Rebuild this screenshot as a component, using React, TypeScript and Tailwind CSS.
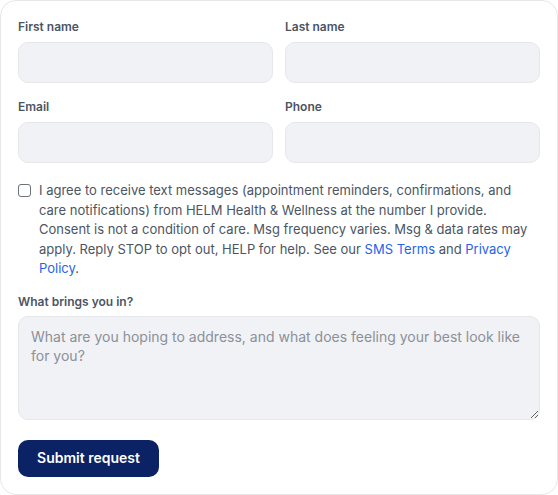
import React from 'react';

function Field({ label }: { label: string }) {
  return (
    <div className="flex flex-col">
      <label className="text-[12px] leading-4 font-semibold text-[#4b5563] mb-[7px]">{label}</label>
      <input
        type="text"
        className="h-[41px] w-full rounded-[10px] border border-[#e5e7eb] bg-[#f1f2f6] px-3 text-sm outline-none"
      />
    </div>
  );
}

export default function App() {
  return (
    <div className="min-h-[495px] bg-white font-['Inter','Liberation_Sans',sans-serif]">
      <form className="w-full rounded-2xl border border-[#e5e7eb] bg-white px-[17px] pt-[18px] pb-[17px]">
        <div className="grid grid-cols-2 gap-x-3 gap-y-[16px]">
          <Field label="First name" />
          <Field label="Last name" />
          <Field label="Email" />
          <Field label="Phone" />
        </div>

        <label className="mt-[18px] flex items-start gap-2 text-[13px] leading-[19.5px] text-[#4b5563]">
          <input
            type="checkbox"
            className="mt-[3px] h-[13px] w-[13px] shrink-0 appearance-none rounded-[3px] border border-[#6b7280] bg-white"
          />
          <span>
            I agree to receive text messages (appointment reminders, confirmations, and care
            notifications) from HELM Health &amp; Wellness at the number I provide. Consent is not a
            condition of care. Msg frequency varies. Msg &amp; data rates may apply. Reply STOP to opt
            out, HELP for help. See our <a className="text-[#2563eb]">SMS Terms</a> and{' '}
            <a className="text-[#2563eb]">Privacy Policy</a>.
          </span>
        </label>

        <div className="mt-[15px] flex flex-col">
          <label className="text-[12px] leading-4 font-semibold text-[#4b5563] mb-[6px]">
            What brings you in?
          </label>
          <textarea
            rows={4}
            placeholder="What are you hoping to address, and what does feeling your best look like for you?"
            className="h-[104px] w-full rounded-[10px] border border-[#e5e7eb] bg-[#f1f2f6] px-3 py-[10px] text-sm leading-[19.6px] text-[#374151] placeholder:text-[#8b9099] outline-none"
          />
        </div>

        <button
          type="button"
          className="mt-[20px] h-[37px] w-[141px] rounded-[10px] bg-[#0b2265] text-sm font-semibold text-white"
        >
          Submit request
        </button>
      </form>
    </div>
  );
}
